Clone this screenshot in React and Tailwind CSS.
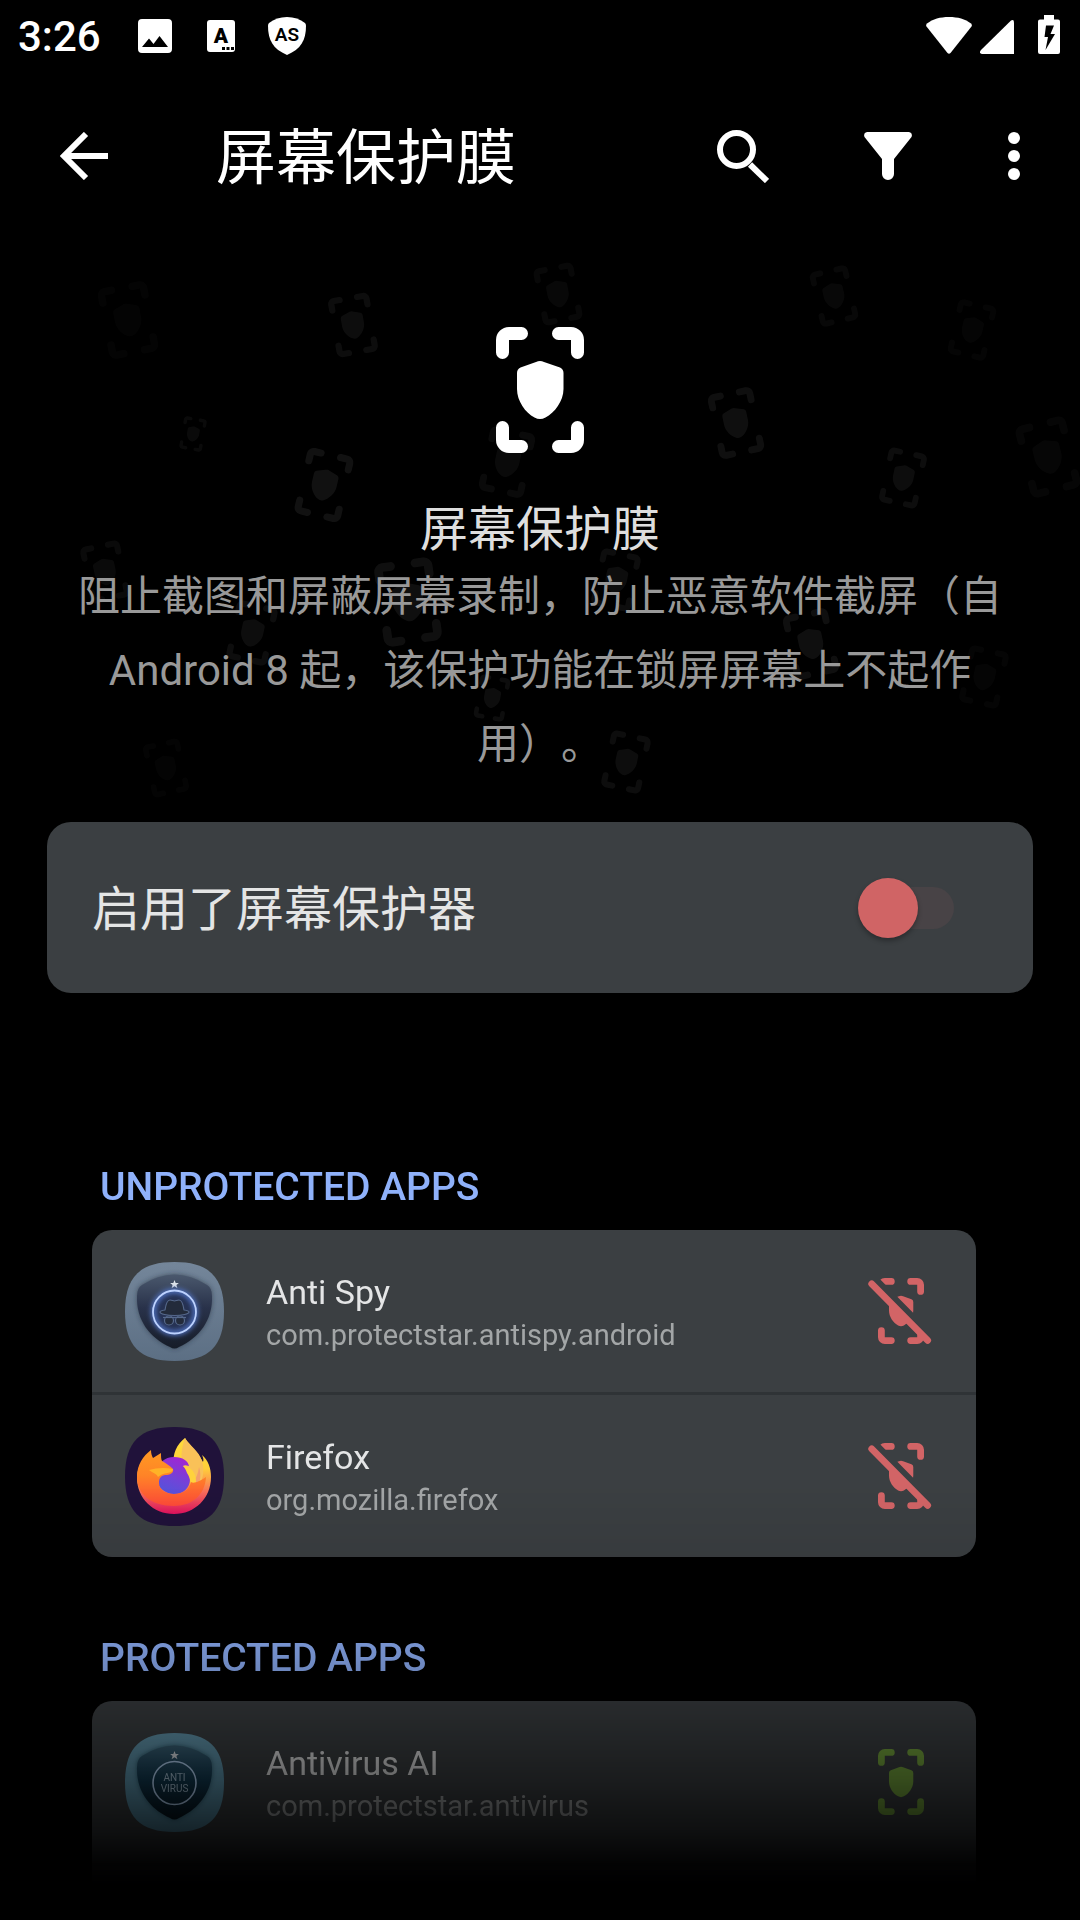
import React, { useId, useState } from "react";

const UNPROTECTED = [
    { name: "Anti Spy", pkg: "com.protectstar.antispy.android", icon: "antispy" },
    { name: "Firefox", pkg: "org.mozilla.firefox", icon: "firefox" },
];

const PROTECTED = [
    { name: "Antivirus AI", pkg: "com.protectstar.antivirus", icon: "antivirus" },
];

// x, y = centre, h = height, r = rotation, o = opacity
const FLOATING = [
    { x: 128, y: 320, h: 72, r: -11, o: 0.015 },
    { x: 353, y: 325, h: 60, r: -10, o: 0.05 },
    { x: 193, y: 434, h: 33, r: 10, o: 0.04 },
    { x: 324, y: 485, h: 68, r: 13, o: 0.065 },
    { x: 507, y: 462, h: 66, r: 12, o: 0.04 },
    { x: 558, y: 294, h: 58, r: -11, o: 0.03 },
    { x: 834, y: 296, h: 56, r: -13, o: 0.03 },
    { x: 972, y: 330, h: 56, r: 13, o: 0.02 },
    { x: 736, y: 423, h: 66, r: -12, o: 0.06 },
    { x: 903, y: 478, h: 56, r: 12, o: 0.05 },
    { x: 1048, y: 457, h: 74, r: -14, o: 0.025 },
    { x: 105, y: 572, h: 58, r: -12, o: 0.04 },
    { x: 408, y: 602, h: 84, r: -8, o: 0.06 },
    { x: 616, y: 580, h: 58, r: 12, o: 0.05 },
    { x: 252, y: 633, h: 60, r: 12, o: 0.05 },
    { x: 811, y: 644, h: 66, r: -12, o: 0.06 },
    { x: 984, y: 677, h: 58, r: 12, o: 0.02 },
    { x: 492, y: 698, h: 44, r: 10, o: 0.05 },
    { x: 626, y: 762, h: 58, r: 12, o: 0.05 },
    { x: 166, y: 768, h: 54, r: -12, o: 0.015 },
];

const ShieldShapes = () => (
    <>
        <g fill="none" stroke="currentColor" strokeWidth="13" strokeLinecap="round">
            <path d="M6.500 25.500V13a6.500 6.500 0 0 1 6.500-6.500H25.500" />
            <path d="M62.500 6.500H75a6.500 6.500 0 0 1 6.500 6.500V25.500" />
            <path d="M81.500 100.500V113a6.500 6.500 0 0 1-6.500 6.500H62.500" />
            <path d="M25.500 119.500H13a6.500 6.500 0 0 1-6.500-6.500V100.500" />
        </g>
        <path
            fill="currentColor"
            d="M44 34q2 0 4 1l16 5.500q3.500 1.500 3.500 5.500V62c0 12-9 24-18 28.500q-5.500 3-11 0c-9-4.500-17.500-16.500-17.500-28.500V46q0-4 3.500-5.500L40 35q2-1 4-1z"
        />
    </>
);

const ShieldIcon = ({ className }) => (
    <svg viewBox="0 0 88 126" className={className} aria-hidden="true">
        <ShieldShapes />
    </svg>
);

const ShieldOffIcon = ({ className }) => {
    const id = useId();
    return (
        <svg viewBox="0 0 88 126" className={className} aria-hidden="true">
            <clipPath id={id}>
                <path d="M-20-22L110 110V-22zM-20 3L110 135H-20z" />
            </clipPath>
            <g clipPath={`url(#${id})`}>
                <ShieldShapes />
            </g>
            <path d="M-12 11L95 119" stroke="currentColor" strokeWidth="13" strokeLinecap="round" />
        </svg>
    );
};

const FloatingShields = () => (
    <svg viewBox="0 240 1080 600" className="absolute inset-x-0 top-0 w-full text-white" aria-hidden="true">
        {FLOATING.map(({ x, y, h, r, o }) => (
            <g key={`${x}-${y}`} opacity={o} transform={`translate(${x} ${y}) rotate(${r}) scale(${h / 126}) translate(-44 -63)`}>
                <ShieldShapes />
            </g>
        ))}
    </svg>
);

/* Squircle tile behind every launcher icon */
const TILE = "M49.500 0C84 0 99 15 99 49.500S84 99 49.500 99 0 84 0 49.500 15 0 49.500 0z";
const BADGE = "M49.500 12.500Q66 12.500 82 23Q87 26 87 34C88 58 74 76 54 85Q49.500 88 45 85C25 76 11 58 12 34Q12 26 17 23Q33 12.500 49.500 12.500z";
const STAR = "M49.500 18l1.200 3h3.200l-2.500 2 1 3.200-2.900-1.900-2.900 1.900 1-3.200-2.500-2h3.200z";

const AntiSpyIcon = () => (
    <svg viewBox="0 0 99 99" className="size-[99px] shrink-0" aria-hidden="true">
        <defs>
            <linearGradient id="spyTile" x2="0" y2="1">
                <stop offset="0" stopColor="#74869a" />
                <stop offset="1" stopColor="#5c6f84" />
            </linearGradient>
            <linearGradient id="spyBadge" x2="0" y2="1">
                <stop offset="0" stopColor="#4a586d" />
                <stop offset=".45" stopColor="#29324a" />
                <stop offset="1" stopColor="#161c28" />
            </linearGradient>
            <filter id="spyBlur" x="-20%" y="-20%" width="140%" height="140%">
                <feGaussianBlur stdDeviation="2.500" />
            </filter>
        </defs>
        <path d={TILE} fill="url(#spyTile)" />
        <path d={BADGE} fill="#1c2534" opacity=".6" filter="url(#spyBlur)" />
        <path d={BADGE} fill="url(#spyBadge)" />
        <path d={STAR} fill="#dfe4ea" />
        <circle cx="49.500" cy="50" r="21.500" fill="#263352" stroke="#5478cc" strokeWidth="4" filter="url(#spyBlur)" />
        <circle cx="49.500" cy="50" r="21.500" fill="none" stroke="#bdd2ff" strokeWidth="1.800" />
        <g stroke="#56698c" strokeWidth="1.200" fill="#232b3b" strokeLinejoin="round">
            <path d="M40 48c1-7 3-10 5-10s3 1 4.500 1 2.500-1 4.500-1 4 3 5 10c3 .5 5 1 5 2 0 2-7 3.500-14.500 3.500S35 52 35 50c0-1 2-1.500 5-2z" />
            <circle cx="44" cy="58.500" r="4.500" />
            <circle cx="55" cy="58.500" r="4.500" />
            <path d="M38 55.500h23" fill="none" />
        </g>
    </svg>
);

const AntivirusIcon = () => (
    <svg viewBox="0 0 99 99" className="size-[99px] shrink-0" aria-hidden="true">
        <defs>
            <linearGradient id="avTile" x2="0" y2="1">
                <stop offset="0" stopColor="#6499b0" />
                <stop offset="1" stopColor="#5590aa" />
            </linearGradient>
            <linearGradient id="avBadge" x2="0" y2="1">
                <stop offset="0" stopColor="#3b6379" />
                <stop offset=".45" stopColor="#123c54" />
                <stop offset="1" stopColor="#04141e" />
            </linearGradient>
            <filter id="avBlur" x="-20%" y="-20%" width="140%" height="140%">
                <feGaussianBlur stdDeviation="2.500" />
            </filter>
        </defs>
        <path d={TILE} fill="url(#avTile)" />
        <path d={BADGE} fill="#0a2534" opacity=".6" filter="url(#avBlur)" />
        <path d={BADGE} fill="url(#avBadge)" />
        <path d={STAR} fill="#dfe4ea" />
        <circle cx="49.500" cy="50" r="21.500" fill="none" stroke="#bcdcff" strokeWidth="1.600" />
        <g fill="#a9c4d8" fontFamily="Roboto, sans-serif" fontSize="10" textAnchor="middle">
            <text x="49.500" y="48">ANTI</text>
            <text x="49.500" y="59">VIRUS</text>
        </g>
    </svg>
);

const FirefoxIcon = () => (
    <svg viewBox="0 0 99 99" className="size-[99px] shrink-0" aria-hidden="true">
        <defs>
            <linearGradient id="ffBack" x2="0" y2="1">
                <stop offset="0" stopColor="#ffdc3c" />
                <stop offset=".4" stopColor="#ffcf3a" />
                <stop offset=".7" stopColor="#f9705a" />
                <stop offset="1" stopColor="#e0115f" />
            </linearGradient>
            <linearGradient id="ffFront" x2="0" y2="1">
                <stop offset="0" stopColor="#ff9a22" />
                <stop offset=".45" stopColor="#ff8427" />
                <stop offset="1" stopColor="#ff4a38" />
            </linearGradient>
            <linearGradient id="ffGlobe" x1=".7" x2=".3" y2="1">
                <stop offset="0" stopColor="#a224d2" />
                <stop offset=".6" stopColor="#6f45d8" />
                <stop offset="1" stopColor="#5353dd" />
            </linearGradient>
        </defs>
        <path d={TILE} fill="#20123a" />
        <path d="M60 11c4 7 13 14 18 24 1-2 0-5-1-7 6 5 9 13 9 22 0 21-16 37-37 37S12 71 12 51c0-5 1-9 3-13l34 0c-2-11 3-21 11-27z" fill="url(#ffBack)" />
        <path d="M60 11c5 8 14 13 17 23 3 11 1 22-7 29-4-8-7-16-12-24-3-9-1-20 2-28z" fill="#f9c158" />
        <path d="M74 40c3 9 1 18-5 24l-2-8c4-4 6-9 7-16z" fill="#f3a06a" />
        <path d="M32 46c0-10 8-16 17-16s14 4 15 9c-3-1-5-1-6 0 5 4 7 9 7 13 0 9-7 15-16 15s-17-7-17-15z" fill="url(#ffGlobe)" />
        <path d="M58 39c8 0 13 7 13 15 0 6-3 11-8 14 4-8 3-16-1-22-1-3-2-5-4-7z" fill="#ffd23c" />
        <path d="M26 23c0 4 1 6 2 8l8-5c0 4 0 6 1 8 4 2 8 5 11 8 1 4-3 6-8 6-5 1-6 4-6 8 0 7 7 11 15 11 9 0 15-4 17-12 3 2 9-1 15-5-1 18-14 29-32 29C26 79 12 67 12 50c0-12 6-21 14-27z" fill="url(#ffFront)" />
        <path d="M24 43c7-2 15-3 24-1 0 5-10 3-15 8-1-3-5-4-9-7z" fill="#ffb327" />
    </svg>
);

const APP_ICONS = {
    antispy: AntiSpyIcon,
    antivirus: AntivirusIcon,
    firefox: FirefoxIcon,
};

const StatusBar = () => (
    <div className="flex h-[72px] items-start justify-between pl-[18px] pr-5 text-white">
        <div className="flex h-[72px] items-start pt-3">
            <span className="text-[42px] leading-[50px] font-medium">3:26</span>
            <svg viewBox="0 0 34 34" className="ml-[37px] mt-[7px] size-[34px]" aria-hidden="true">
                <path fillRule="evenodd" fill="currentColor" d="M4 0h26a4 4 0 0 1 4 4v26a4 4 0 0 1-4 4H4a4 4 0 0 1-4-4V4a4 4 0 0 1 4-4zM4 28h26l-8.500-11-6 8-4.500-5.500z" />
            </svg>
            <svg viewBox="0 0 28 32" className="ml-[35px] mt-2 h-8 w-7" aria-hidden="true">
                <rect width="28" height="32" rx="3" fill="currentColor" />
                <text x="14" y="23" textAnchor="middle" fontFamily="Roboto, sans-serif" fontSize="21" fontWeight="900" fill="#000">A</text>
                <path d="M15 27h3v3h-3zM19.500 27h3v3h-3zM24 27h3v3h-3z" />
            </svg>
            <svg viewBox="0 0 38 38" className="ml-[33px] mt-[5px] size-[38px]" aria-hidden="true">
                <path fill="currentColor" d="M19 0c7 0 13 2 18 6q1 1 1 3c0 14-5 23-19 29C5 32 0 23 0 9q0-2 1-3c5-4 11-6 18-6z" />
                <text x="19" y="24" textAnchor="middle" fontFamily="Roboto, sans-serif" fontSize="19" fontWeight="600" fill="#000">AS</text>
            </svg>
        </div>
        <div className="flex h-[72px] items-start pt-[15px]">
            <svg viewBox="0 0 46 37" className="mt-0.5 h-[37px] w-[46px]" aria-hidden="true">
                <path fill="currentColor" d="M23 0c9 0 16 2 22 6.500q1.500 1.500.500 3L24.500 36q-1.500 1.500-3 0L.500 9.500Q-.500 8 1 6.500C7 2 14 0 23 0z" />
            </svg>
            <svg viewBox="0 0 34 34" className="ml-2 mt-[5px] size-[34px]" aria-hidden="true">
                <path fill="currentColor" d="M31 .500q3-1.500 3 2V34H2q-3.500-1-1-4z" />
            </svg>
            <svg viewBox="0 0 22 39" className="ml-6 h-[39px] w-[22px]" aria-hidden="true">
                <path fillRule="evenodd" fill="currentColor" d="M6 0h10v4.500h4q2 0 2 2V37q0 2-2 2H2q-2 0-2-2V6.500q0-2 2-2h4zM8 10.500L6.500 22H10L7.500 35 17 19h-4.500L16 10.500z" />
            </svg>
        </div>
    </div>
);

const AppBar = () => (
    <header className="flex h-[168px] items-center pl-[60px] text-white">
        <button type="button" aria-label="返回">
            <svg viewBox="0 0 48 48" className="size-12" fill="none" stroke="currentColor" strokeWidth="6" aria-hidden="true">
                <path d="M48 24H4M26 2L4 24l22 22" />
            </svg>
        </button>
        <h1 className="ml-[108px] flex-1 pt-1.5 text-[60px] leading-[72px]">屏幕保护膜</h1>
        <button type="button" aria-label="搜索">
            <svg viewBox="0 0 52 53" className="h-[53px] w-[52px]" fill="none" stroke="currentColor" aria-hidden="true">
                <circle cx="19.500" cy="19.500" r="16.500" strokeWidth="6" />
                <path d="M33 34.500L50 51" strokeWidth="6" />
            </svg>
        </button>
        <button type="button" aria-label="筛选" className="ml-[95px]">
            <svg viewBox="0 0 48 48" className="size-12" fill="currentColor" aria-hidden="true">
                <path d="M3 0h42q4 1 2.500 5L30 27v15a6 6 0 0 1-12 0V27L.500 5Q-1 1 3 0z" />
            </svg>
        </button>
        <button type="button" aria-label="更多选项" className="ml-24 mr-[60px]">
            <svg viewBox="0 0 12 48" className="h-12 w-3" fill="currentColor" aria-hidden="true">
                <circle cx="6" cy="6" r="6" />
                <circle cx="6" cy="24" r="6" />
                <circle cx="6" cy="42" r="6" />
            </svg>
        </button>
    </header>
);

const AppRow = ({ app, isProtected }) => {
    const Icon = APP_ICONS[app.icon];
    return (
        <li className="box-content flex h-[162px] items-center pl-[33px] pr-[52px]">
            <Icon />
            <div className="ml-[42px] min-w-0 flex-1 pt-1">
                <p className="text-[34px] leading-[44px] text-[#e4e5e6]">{app.name}</p>
                <p className="text-[29px] leading-[42px] text-[#a3a6a7]">{app.pkg}</p>
            </div>
            <button type="button" aria-label={`${app.name} ${isProtected ? "已保护" : "未保护"}`}>
                {isProtected ? (
                    <ShieldIcon className="h-[66px] w-[46px] text-[#77a83f]" />
                ) : (
                    <ShieldOffIcon className="h-[66px] w-[46px] overflow-visible text-[#d26466]" />
                )}
            </button>
        </li>
    );
};

const AppSection = ({ title, apps, isProtected, className }) => (
    <section className={className}>
        <h3 className="pl-2 text-[39px] leading-[48px] font-medium text-[#8fb1fa]">{title}</h3>
        <ul className="mt-[19px] divide-y-3 divide-[#2f3336] overflow-hidden rounded-[20px] bg-[#3b3f42] last:pb-0">
            {apps.map((app) => (
                <AppRow key={app.pkg} app={app} isProtected={isProtected} />
            ))}
            {isProtected && <li className="h-9" aria-hidden="true" />}
        </ul>
    </section>
);

const App = () => {
    const [enabled, setEnabled] = useState(false);

    return (
        <div className="min-h-screen overflow-hidden bg-black font-['Roboto','Noto_Sans_CJK_SC',sans-serif]" lang="zh-CN">
            <StatusBar />
            <AppBar />

            <main className="relative">
                <FloatingShields />

                {/* Intro */}
                <div className="relative flex flex-col items-center px-[72px] pt-[87px] text-center">
                    <ShieldIcon className="h-[126px] w-[88px] text-white" />
                    <h2 className="mt-[47px] text-[48px] leading-[60px] text-[#dedede]">屏幕保护膜</h2>
                    <p className="text-[42px] leading-[74px] text-[#999] [text-spacing-trim:space-all]">
                        阻止截图和屏蔽屏幕录制，防止恶意软件截屏（自 Android 8 起，该保护功能在锁屏屏幕上不起作用）。
                    </p>
                </div>

                {/* Master switch */}
                <label className="relative mx-[47px] mt-10 flex h-[171px] items-center justify-between rounded-3xl bg-[#3b3f42] pl-[45px] pr-[79px]">
                    <span className="pt-1 text-[48px] leading-[60px] text-[#e4e5e5]">启用了屏幕保护器</span>
                    <input
                        type="checkbox"
                        role="switch"
                        checked={enabled}
                        onChange={(e) => setEnabled(e.target.checked)}
                        className="relative h-[42px] w-[89px] appearance-none rounded-full bg-[#484346]
              before:absolute before:-left-[7px] before:-top-[9px] before:size-[60px]
              before:rounded-full before:bg-[#d06465] before:shadow-[0_3px_5px_rgba(0,0,0,0.3)]
              checked:before:translate-x-10 checked:before:bg-[#77a83f]"
                    />
                </label>

                {/* App lists, fading out towards the bottom */}
                <div className="mt-[170px] pl-[92px] pr-[104px] [mask-image:linear-gradient(to_bottom,#000_320px,rgba(0,0,0,0.93)_390px,rgba(0,0,0,0.83)_480px,rgba(0,0,0,0.68)_540px,rgba(0,0,0,0.45)_615px,rgba(0,0,0,0.26)_665px,rgba(0,0,0,0.06)_700px,transparent_722px)]">
                    <AppSection title="UNPROTECTED APPS" apps={UNPROTECTED} />
                    <AppSection title="PROTECTED APPS" apps={PROTECTED} isProtected className="mt-[77px]" />
                </div>
            </main>
        </div>
    );
};

export default App;
